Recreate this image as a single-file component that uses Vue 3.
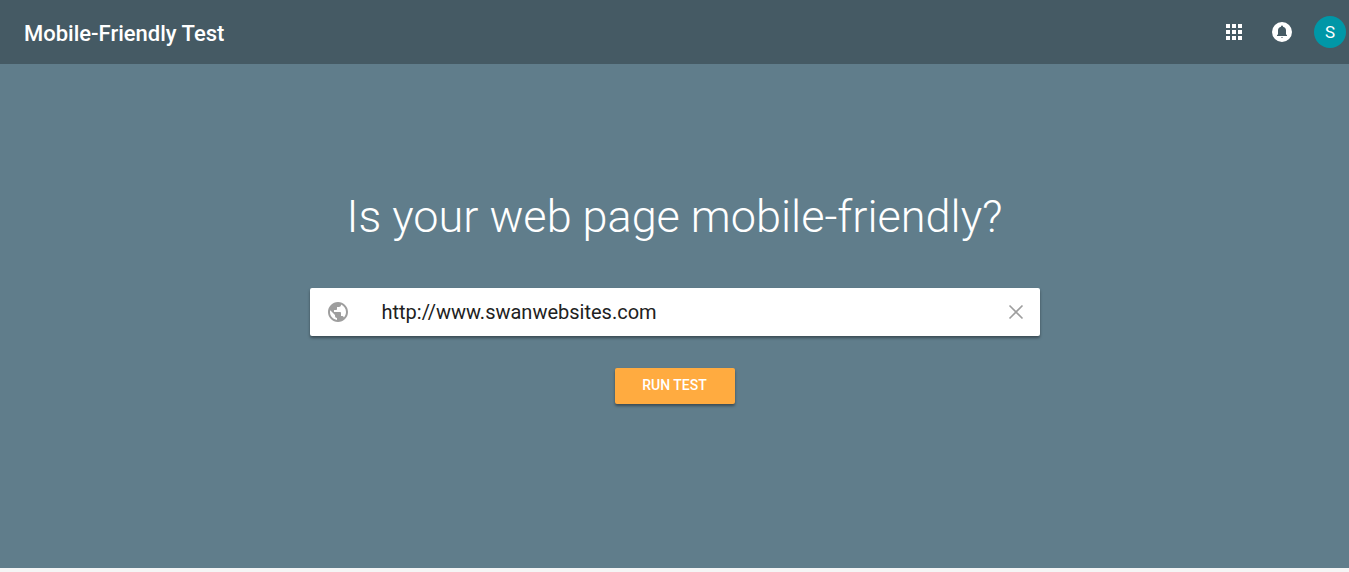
<script setup>
import { ref } from 'vue'
const url = ref('http://www.swanwebsites.com')
</script>

<template>
  <div class="page">
    <header class="bar">
      <div class="title">Mobile-Friendly Test</div>
      <button class="icon" type="button" aria-label="Google apps">
        <svg viewBox="0 0 24 24" width="24" height="24"><path d="M4 8h4V4H4v4zm6 12h4v-4h-4v4zm-6 0h4v-4H4v4zm0-6h4v-4H4v4zm6 0h4v-4h-4v4zm6-10v4h4V4h-4zm-6 4h4V4h-4v4zm6 6h4v-4h-4v4zm0 6h4v-4h-4v4z" /></svg>
      </button>
      <button class="icon" type="button" aria-label="Notifications">
        <svg viewBox="0 0 24 24" width="24" height="24"><path fill-rule="evenodd" d="M12 2a10 10 0 1 0 0 20 10 10 0 0 0 0-20zM7 16v-.8l1-1v-4C8 8.400 9.200 7.200 11 6.700V6.500a1 1 0 0 1 2 0v.2c1.800.5 3 1.700 3 3.500v4l1 1v.8zM11 17.200h2a1 .8 0 0 1-2 0z" /></svg>
      </button>
      <button class="avatar" type="button" aria-label="Account S">S</button>
    </header>
    <main class="main">
      <h1>Is your web page mobile-friendly?</h1>
      <form class="form" @submit.prevent>
        <div class="field">
          <svg class="globe" viewBox="0 0 24 24" width="24" height="24"><path d="M12 2C6.480 2 2 6.480 2 12s4.480 10 10 10 10-4.480 10-10S17.520 2 12 2zm-1 17.930c-3.950-.490-7-3.850-7-7.930 0-.620.080-1.210.210-1.790L9 15v1c0 1.100.900 2 2 2v1.930zm6.900-2.540c-.260-.810-1-1.390-1.900-1.390h-1v-3c0-.550-.450-1-1-1H8v-2h2c.550 0 1-.450 1-1V7h2c1.100 0 2-.900 2-2v-.410c2.930 1.190 5 4.060 5 7.410 0 2.080-.800 3.970-2.100 5.390z" /></svg>
          <input v-model="url" type="text" aria-label="Enter a URL to test" spellcheck="false" />
          <button class="clear" type="button" aria-label="Clear" @click="url = ''">
            <svg viewBox="0 0 24 24" width="24" height="24"><path d="M5.500 5.500l13 13M18.500 5.500l-13 13" /></svg>
          </button>
        </div>
        <button class="run" type="submit">RUN TEST</button>
      </form>
    </main>
  </div>
</template>

<style>
body { background: #f5f5f5; }
</style>

<style scoped>
.page { min-height: calc(100vh - 4px); display: flex; flex-direction: column; background: #607d8b; font-family: Roboto, sans-serif; color: #fff; }
button { border: 0; padding: 0; font-family: inherit; color: inherit; cursor: pointer; background: none; }
svg { display: block; fill: currentColor; }
.bar { height: 64px; display: flex; align-items: center; background: #455a64; padding: 0 3px 0 24px; }
.title { flex: 1; padding-top: 4px; font-size: 22px; line-height: 28px; font-weight: 500; }
.icon { margin-right: 24px; }
.icon + .avatar { margin-left: -4px; }
.avatar { width: 32px; height: 32px; border-radius: 50%; background: #0097a7; font-size: 17px; }
.main { display: flex; flex-direction: column; align-items: center; padding: 120px 24px 32px; }
h1 { margin: 0; font-size: 45px; line-height: 66px; font-weight: 300; text-align: center; }
.form { width: 100%; max-width: 730px; margin-top: 38px; display: flex; flex-direction: column; align-items: center; }
.field { width: 100%; height: 48px; box-sizing: border-box; padding: 0 12px 0 16px; display: flex; align-items: center; background: #fff; border-radius: 2px; box-shadow: 0 2px 3px rgba(0, 0, 0, 0.4); }
.globe { color: #9e9e9e; margin-right: 32px; }
input { flex: 1; min-width: 0; height: 32px; border: 0; padding: 0; outline: 0; background: none; font-family: inherit; font-size: 20px; color: #212121; }
.clear { color: #9e9e9e; }
.clear path { fill: none; stroke: currentColor; stroke-width: 1.6; }
.run { margin-top: 32px; width: 120px; height: 36px; padding-bottom: 2px; border-radius: 2px; background: #ffab40; font-size: 14px; font-weight: 500; box-shadow: 0 2px 3px rgba(0, 0, 0, 0.4); }
</style>
